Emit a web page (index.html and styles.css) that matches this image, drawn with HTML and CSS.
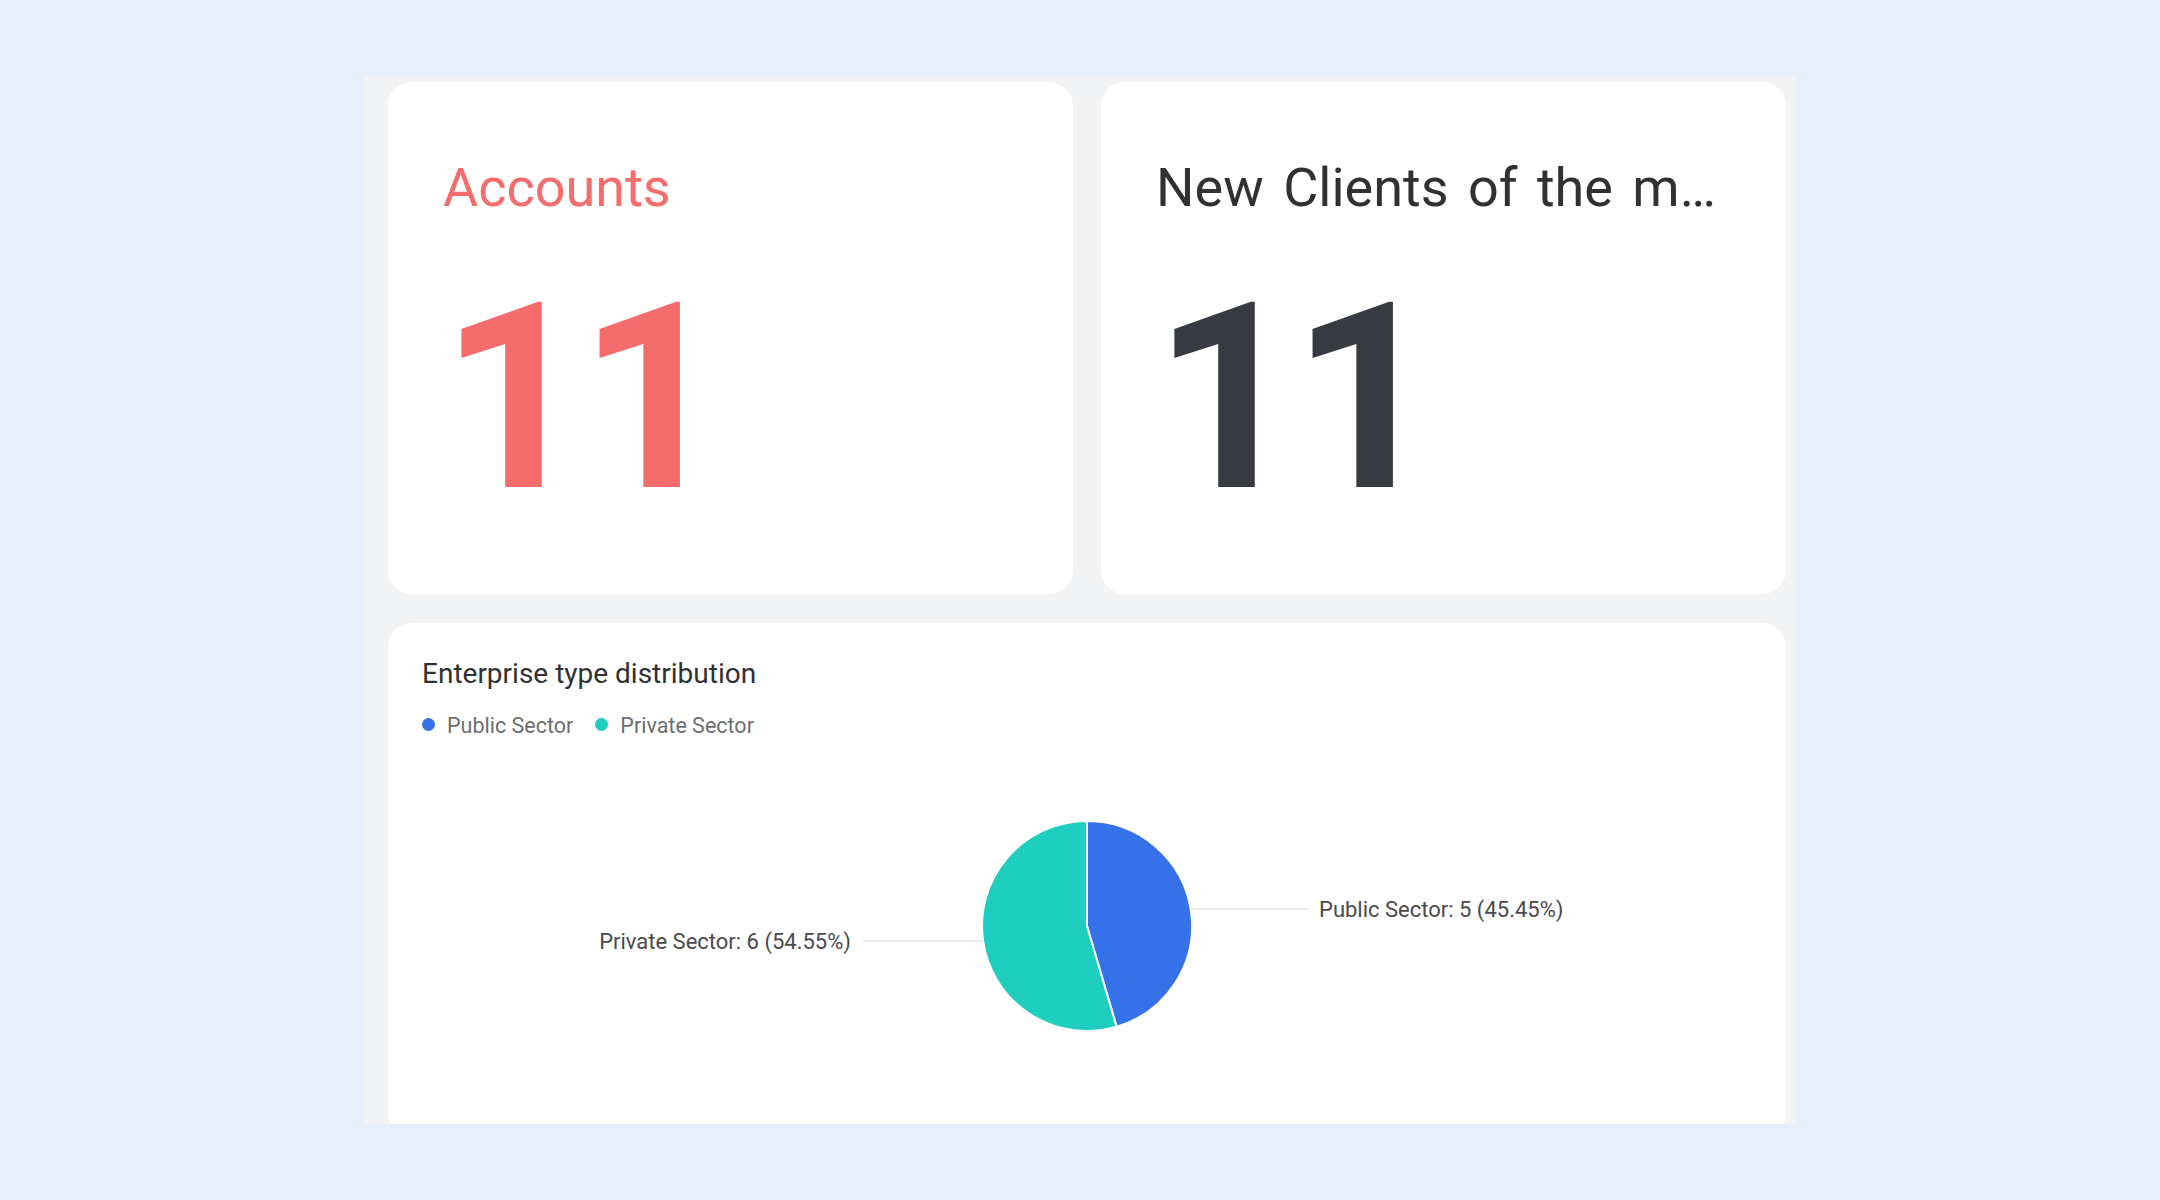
FILE: index.html
```html
<!DOCTYPE html>
<html lang="en">
<head>
	<meta charset="utf-8">
	<meta name="viewport" content="width=device-width, initial-scale=1.0">
	<title>Dashboard</title>
	<link rel="stylesheet" href="styles.css">
</head>
<body>
	<div class="page">
		<div class="panel">
			<!-- top row: two counters -->
			<div class="stats">
				<div class="stat-card">
					<div class="stat-title red">Accounts</div>
					<div class="stat-value red">11</div>
				</div>
				<div class="stat-card">
					<div class="stat-title">New Clients of the month</div>
					<div class="stat-value">11</div>
				</div>
			</div>

			<!-- pie chart card -->
			<div class="chart-card">
				<div class="chart-head">
					<div class="chart-title">Enterprise type distribution</div>
					<div class="legend">
						<span class="legend-item"><i class="dot public"></i>Public Sector</span>
						<span class="legend-item"><i class="dot private"></i>Private Sector</span>
					</div>
				</div>
				<svg class="pie" width="1398" height="385" viewBox="0 0 1398 385">
					<!-- Public Sector 5/11, Private Sector 6/11, starting at 12 o'clock -->
					<path class="slice-public" d="M699,173 L699,68 A105,105 0 0,1 728.6,273.75 Z"/>
					<path class="slice-private" d="M699,173 L728.6,273.75 A105,105 0 1,1 699,68 Z"/>

					<path class="label-line" d="M802.6,156 L920,156"/>
					<text class="label" x="931" y="164">Public Sector: 5 (45.45%)</text>

					<path class="label-line" d="M595,188 L475,188"/>
					<text class="label" x="463" y="196" text-anchor="end">Private Sector: 6 (54.55%)</text>
				</svg>
			</div>
		</div>
	</div>
</body>
</html>
```

FILE: styles.css
```css
html, body {
	margin: 0;
	background: #e9effd;
	font-family: Roboto, "Noto Sans", sans-serif;
}

.page {
	padding: 76px 0 0 364px;
}

/* grey board holding the cards */
.panel {
	box-sizing: border-box;
	width: 1432px;
	height: 1048px;
	padding: 6px 10px 0 24px;
	background: #f2f3f5;
	overflow: hidden;
}

.stats {
	display: grid;
	grid-template-columns: minmax(0, 1fr) minmax(0, 1fr);
	gap: 28px;
}

.stat-card {
	box-sizing: border-box;
	min-width: 0;
	height: 512px;
	padding: 73px 62px 0 55px;
	background: #fff;
	border-radius: 24px;
}

.stat-title {
	font-size: 54px;
	line-height: 66px;
	word-spacing: 6px;
	color: #303133;
	white-space: nowrap;
	overflow: hidden;
	text-overflow: ellipsis;
}

.stat-value {
	margin-top: 47px;
	margin-left: -3px;
	font-size: 260px;
	font-weight: 700;
	line-height: 260px;
	letter-spacing: -11px;
	color: #373a40;
}

.red {
	color: #f56c6c;
}

/* chart card */
.chart-card {
	height: 515px;
	margin-top: 29px;
	background: #fff;
	border-radius: 24px;
}

.chart-head {
	box-sizing: border-box;
	height: 130px;
	padding: 37px 34px 0;
}

.chart-title {
	font-size: 28px;
	line-height: 28px;
	color: #303133;
}

.legend {
	display: flex;
	gap: 22px;
	margin-top: 27px;
	font-size: 21.5px;
	line-height: 22px;
	color: #6e6e6e;
}

.legend-item {
	display: flex;
	align-items: center;
	gap: 12px;
}

.dot {
	width: 13px;
	height: 13px;
	margin-bottom: 4px;
	border-radius: 50%;
}

.dot.public {
	background: #3572ea;
}

.dot.private {
	background: #1ecfc0;
}

.pie {
	display: block;
}

.slice-public {
	fill: #3572ea;
	stroke: #fff;
	stroke-width: 2;
	stroke-linejoin: round;
}

.slice-private {
	fill: #1ecfc0;
	stroke: #fff;
	stroke-width: 2;
	stroke-linejoin: round;
}

.label-line {
	fill: none;
	stroke: #d4d4d4;
	stroke-width: 1;
}

.label {
	font-family: Roboto, "Noto Sans", sans-serif;
	font-size: 22px;
	fill: #4a4a4a;
}
```
